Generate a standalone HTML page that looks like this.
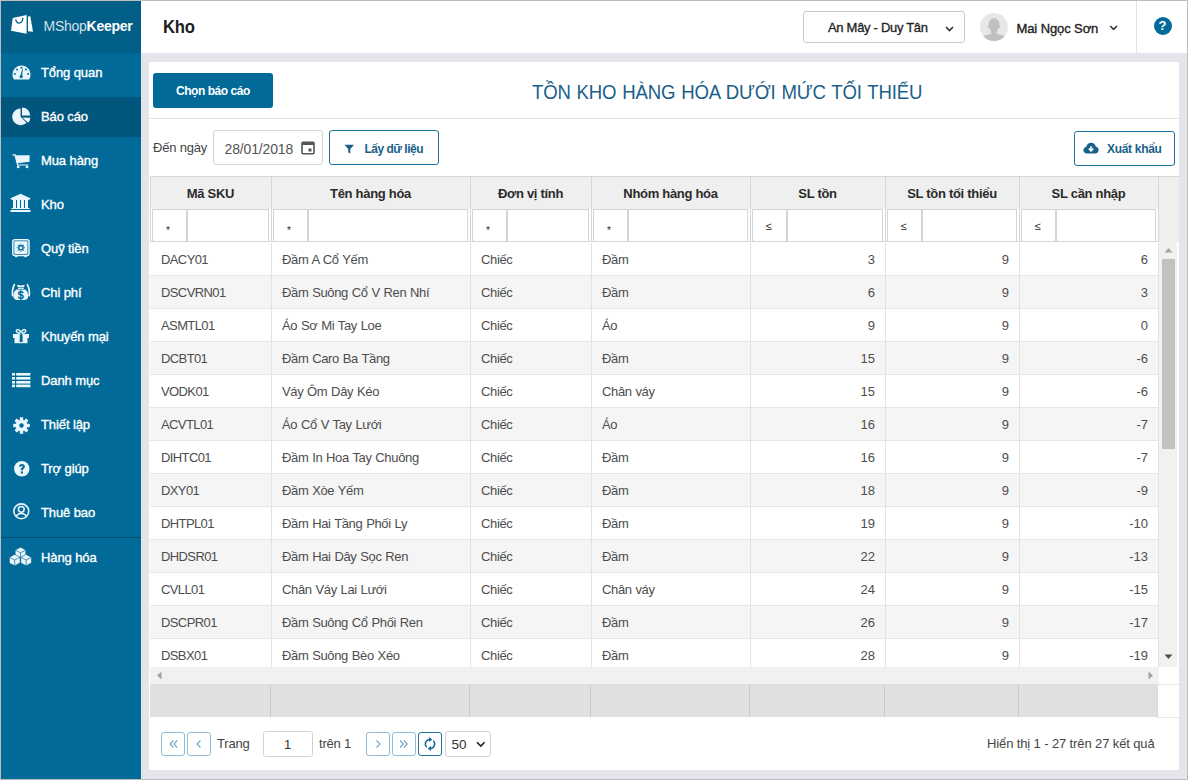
<!DOCTYPE html>
<html><head><meta charset="utf-8">
<style>
*{box-sizing:border-box;margin:0;padding:0}
html,body{width:1188px;height:780px;overflow:hidden}
body{position:relative;background:#e3e5ea;font-family:"Liberation Sans",sans-serif;color:#444;font-size:13px}
.abs{position:absolute}
.t{position:absolute;white-space:nowrap;line-height:1}
.b{position:absolute}
</style></head><body>

<div class="b" style="left:0;top:0;width:1188px;height:780px;border:1px solid #bdbdbd;z-index:99"></div>
<div class="b" style="left:1px;top:1px;width:140px;height:778px;background:#016a99"></div>
<div class="b" style="left:1px;top:1px;width:140px;height:52px;background:#025f88"></div>
<div class="b" style="left:1px;top:97px;width:140px;height:40px;background:#01567e"></div>
<div class="b" style="left:1px;top:537px;width:140px;height:1px;background:#004f72"></div>
<svg class="abs" style="left:0px;top:0px" width="40" height="40" viewBox="0 0 40 40"><path fill="#fff" d="M12.8 17.9 L26.6 15 L26.6 33.8 L11 30.75z"/><path fill="#fff" d="M28 16.5 L30.3 16.2 L33 31.7 L28 31.2z"/><path d="M15.8 19.2 C16 24.6 22.6 24.6 22.9 17.8" stroke="#005e87" stroke-width="1.3" fill="none"/></svg>
<div class="t" style="left:43.5px;top:19px;font-size:14px;color:#fff"><span style="font-weight:normal;letter-spacing:-0.25px;color:rgba(255,255,255,0.82)">MShop</span><span style="font-weight:bold;letter-spacing:-0.3px">Keeper</span></div>
<div class="t" style="left:41px;top:66.0px;font-size:13px;color:#fff;letter-spacing:-0.1px;-webkit-text-stroke:0.35px #fff">Tổng quan</div>
<div class="t" style="left:41px;top:110.0px;font-size:13px;color:#fff;letter-spacing:-0.1px;-webkit-text-stroke:0.35px #fff">Báo cáo</div>
<div class="t" style="left:41px;top:154.0px;font-size:13px;color:#fff;letter-spacing:-0.1px;-webkit-text-stroke:0.35px #fff">Mua hàng</div>
<div class="t" style="left:41px;top:198.0px;font-size:13px;color:#fff;letter-spacing:-0.1px;-webkit-text-stroke:0.35px #fff">Kho</div>
<div class="t" style="left:41px;top:242.0px;font-size:13px;color:#fff;letter-spacing:-0.1px;-webkit-text-stroke:0.35px #fff">Quỹ tiền</div>
<div class="t" style="left:41px;top:286.0px;font-size:13px;color:#fff;letter-spacing:-0.1px;-webkit-text-stroke:0.35px #fff">Chi phí</div>
<div class="t" style="left:41px;top:330.0px;font-size:13px;color:#fff;letter-spacing:-0.1px;-webkit-text-stroke:0.35px #fff">Khuyến mại</div>
<div class="t" style="left:41px;top:374.0px;font-size:13px;color:#fff;letter-spacing:-0.1px;-webkit-text-stroke:0.35px #fff">Danh mục</div>
<div class="t" style="left:41px;top:418.0px;font-size:13px;color:#fff;letter-spacing:-0.1px;-webkit-text-stroke:0.35px #fff">Thiết lập</div>
<div class="t" style="left:41px;top:462.0px;font-size:13px;color:#fff;letter-spacing:-0.1px;-webkit-text-stroke:0.35px #fff">Trợ giúp</div>
<div class="t" style="left:41px;top:506.0px;font-size:13px;color:#fff;letter-spacing:-0.1px;-webkit-text-stroke:0.35px #fff">Thuê bao</div>
<div class="t" style="left:41px;top:551.2px;font-size:13px;color:#fff;letter-spacing:-0.1px;-webkit-text-stroke:0.35px #fff">Hàng hóa</div>
<svg class="abs" style="left:12px;top:64.5px" width="19" height="15" viewBox="0 0 19 15"><path fill="#eaf6fc" d="M9.5 0.5C4.5 0.5 0.5 4.6 0.5 9.6c0 1.9 0.5 3.5 1.4 4.9h15.2c0.9-1.4 1.4-3 1.4-4.9C18.5 4.6 14.5 0.5 9.5 0.5z"/>
      <g fill="#016a99"><circle cx="9.5" cy="2.8" r="1"/><circle cx="5" cy="4.6" r="1"/><circle cx="14" cy="4.6" r="1"/><circle cx="2.9" cy="9.1" r="1"/><circle cx="16.1" cy="9.1" r="1"/>
      <circle cx="9.2" cy="11.6" r="1.6"/><path d="M8.4 11.2 L10.3 3.8 L10.9 4 L10 11.5z"/></g></svg>
<svg class="abs" style="left:11.5px;top:106.5px" width="20" height="19" viewBox="0 0 20 19"><g fill="#eaf6fc"><path d="M8.60 9.80 L14.54 15.74 A8.4 8.4 0 1 1 8.60 1.40z"/><path d="M10.00 8.60 L10.00 0.40 A8.2 8.2 0 0 1 18.20 8.60z"/><path d="M10.30 10.40 L18.30 10.68 A8.0 8.0 0 0 1 16.15 15.86z"/></g></svg>
<svg class="abs" style="left:12px;top:152.8px" width="18" height="16" viewBox="0 0 18 16"><g fill="#eaf6fc"><path d="M0.4 1.2 H3.4 L4.1 2.3 H17.6 V8.8 L5.7 10.2 L6 11.4 H16.2 V12.6 H5.1 L2.5 2.4 H0.4z"/><circle cx="6.2" cy="13.9" r="1.4"/><circle cx="15" cy="13.9" r="1.4"/></g></svg>
<svg class="abs" style="left:10px;top:193px" width="21" height="20" viewBox="0 0 21 20"><g fill="#eaf6fc"><path d="M10.5 0.8 L20.5 5.2 V6 H0.5 V5.2z"/><rect x="1.5" y="6" width="18" height="1"/><rect x="3" y="7" width="3" height="8"/><rect x="7" y="7" width="3" height="8"/><rect x="11" y="7" width="3" height="8"/><rect x="15" y="7" width="3" height="8"/><rect x="1.5" y="15" width="18" height="1"/><rect x="0.5" y="17" width="20" height="2"/></g></svg>
<svg class="abs" style="left:12px;top:238.8px" width="18" height="19" viewBox="0 0 18 19"><rect x="0.8" y="0.8" width="16.2" height="15.8" rx="2" stroke="#eaf6fc" stroke-width="1.5" fill="none"/><rect x="2.3" y="2.3" width="13.2" height="12.8" rx="1" fill="#eaf6fc"/><circle cx="8.9" cy="8.7" r="2.9" fill="#016a99"/><circle cx="8.9" cy="8.7" r="1.5" fill="#eaf6fc"/><circle cx="12.50" cy="8.70" r="0.55" fill="#016a99"/><circle cx="11.45" cy="11.25" r="0.55" fill="#016a99"/><circle cx="8.90" cy="12.30" r="0.55" fill="#016a99"/><circle cx="6.35" cy="11.25" r="0.55" fill="#016a99"/><circle cx="5.30" cy="8.70" r="0.55" fill="#016a99"/><circle cx="6.35" cy="6.15" r="0.55" fill="#016a99"/><circle cx="8.90" cy="5.10" r="0.55" fill="#016a99"/><circle cx="11.45" cy="6.15" r="0.55" fill="#016a99"/><rect x="3" y="16.2" width="2.5" height="2" fill="#eaf6fc"/><rect x="12.3" y="16.2" width="2.5" height="2" fill="#eaf6fc"/></svg>
<svg class="abs" style="left:0px;top:280px" width="40" height="24" viewBox="0 0 40 24"><g fill="#eaf6fc"><path d="M17 5.2 C18.5 4.4 19.8 5.6 20.9 5.6 C22 5.6 23.3 4.4 24.8 5.2 L24 7.1 H17.8z"/><rect x="18" y="7.6" width="5.7" height="1.3"/><path d="M16.4 9.6 H25.2 C27.6 11.5 28.6 14.5 28.1 17 C27.7 19.3 26 20 24 20 H17.6 C15.6 20 13.9 19.3 13.5 17 C13 14.5 14 11.5 16.4 9.6z"/></g><g fill="none" stroke="#eaf6fc" stroke-width="1.7" stroke-linecap="round"><path d="M14.4 4.6 C12.6 8 12.2 12 12.6 15.6"/><path d="M27.4 4.6 C29.2 8 29.6 12 29.2 15.6"/></g><rect x="20.3" y="9.6" width="1" height="10.4" fill="#016a99"/><text x="20.8" y="19.3" font-family="Liberation Sans" font-size="11.5" font-weight="bold" text-anchor="middle" fill="#016a99">$</text></svg>
<svg class="abs" style="left:13px;top:328.8px" width="16" height="15" viewBox="0 0 16 15"><g fill="#eaf6fc"><rect x="0" y="5" width="16" height="4"/><rect x="1.5" y="9" width="13" height="5.2"/></g><g fill="none" stroke="#eaf6fc" stroke-width="1.4"><ellipse cx="5.3" cy="2.4" rx="2.1" ry="1.5" transform="rotate(35 5.3 2.4)"/><ellipse cx="10.7" cy="2.4" rx="2.1" ry="1.5" transform="rotate(-35 10.7 2.4)"/></g><rect x="6.7" y="5.3" width="2.9" height="7.8" rx="0.4" fill="#016a99"/></svg>
<svg class="abs" style="left:12px;top:372.8px" width="19" height="15" viewBox="0 0 19 15"><g fill="#eaf6fc"><rect x="0" y="0" width="3" height="2.6"/><rect x="4.2" y="0" width="14.2" height="2.6"/><rect x="0" y="4" width="3" height="2.6"/><rect x="4.2" y="4" width="14.2" height="2.6"/><rect x="0" y="8" width="3" height="2.6"/><rect x="4.2" y="8" width="14.2" height="2.6"/><rect x="0" y="11.6" width="3" height="2.6"/><rect x="4.2" y="11.6" width="14.2" height="2.6"/></g></svg>
<svg class="abs" style="left:12.5px;top:416.5px" width="17" height="17" viewBox="0 0 17 17"><g transform="translate(8.5 8.5)" fill="#eaf6fc"><circle r="5.8"/>
      <rect x="-1.7" y="-8.3" width="3.4" height="4" rx="0.6"/><rect x="-1.7" y="-8.3" width="3.4" height="4" rx="0.6" transform="rotate(45)"/><rect x="-1.7" y="-8.3" width="3.4" height="4" rx="0.6" transform="rotate(90)"/><rect x="-1.7" y="-8.3" width="3.4" height="4" rx="0.6" transform="rotate(135)"/><rect x="-1.7" y="-8.3" width="3.4" height="4" rx="0.6" transform="rotate(180)"/><rect x="-1.7" y="-8.3" width="3.4" height="4" rx="0.6" transform="rotate(225)"/><rect x="-1.7" y="-8.3" width="3.4" height="4" rx="0.6" transform="rotate(270)"/><rect x="-1.7" y="-8.3" width="3.4" height="4" rx="0.6" transform="rotate(315)"/>
      <circle r="2.2" fill="#016a99"/></g></svg>
<svg class="abs" style="left:13.5px;top:460.5px" width="16" height="16" viewBox="0 0 16 16"><circle cx="7.8" cy="7.8" r="7.7" fill="#eaf6fc"/><path d="M5 5.6 C5 3.9 6.2 3 7.9 3 C9.7 3 10.9 4 10.9 5.4 C10.9 7.3 8.9 7.4 8.9 8.9 V9.3 H6.8 V8.7 C6.8 6.6 8.7 6.4 8.7 5.5 C8.7 5 8.4 4.7 7.9 4.7 C7.4 4.7 7.1 5.1 7.1 5.7z" fill="#016a99"/><rect x="6.8" y="10.4" width="2.1" height="2.1" fill="#016a99"/></svg>
<svg class="abs" style="left:13px;top:502.5px" width="17" height="17" viewBox="0 0 17 17"><circle cx="8.3" cy="8.3" r="7.4" fill="none" stroke="#eaf6fc" stroke-width="1.6"/><circle cx="8.3" cy="6.3" r="2.9" fill="none" stroke="#eaf6fc" stroke-width="1.5"/><path d="M3.2 13.6 C4 11.5 5.8 10.5 8.3 10.5 C10.8 10.5 12.6 11.5 13.4 13.6" fill="none" stroke="#eaf6fc" stroke-width="1.5"/></svg>
<svg class="abs" style="left:9px;top:545.5px" width="23" height="20" viewBox="0 0 23 20"><g fill="#eaf6fc" stroke="#016a99" stroke-width="0.6" stroke-linejoin="round"><path d="M6.2 4 L11.5 1.2 L16.8 4 V9.8 L11.5 12.5 L6.2 9.8z"/><path d="M0.4 11.2 L5.7 8.4 L11 11.2 V17 L5.7 19.7 L0.4 17z"/><path d="M11.8 11.2 L17.1 8.4 L22.4 11.2 V17 L17.1 19.7 L11.8 17z"/></g><g fill="none" stroke="#016a99" stroke-width="0.7"><path d="M6.2 4 L11.5 6.8 L16.8 4 M11.5 6.8 V12.5"/><path d="M0.4 11.2 L5.7 14 L11 11.2 M5.7 14 V19.7"/><path d="M11.8 11.2 L17.1 14 L22.4 11.2 M17.1 14 V19.7"/></g></svg>
<div class="b" style="left:141px;top:1px;width:1046px;height:52px;background:#fff"></div>
<div class="t" style="left:162.5px;top:18px;font-size:18.5px;font-weight:bold;color:#1d1d1d;letter-spacing:-0.3px;transform:scaleX(0.9);transform-origin:0 0">Kho</div>
<div class="b" style="left:803px;top:11px;width:162px;height:32px;border:1px solid #c9c9c9;border-radius:3px;background:#fff"></div>
<div class="t" style="left:828px;top:21px;font-size:13px;color:#222;letter-spacing:-0.3px;-webkit-text-stroke:0.3px #222">An Mây - Duy Tân</div>
<svg class="abs" style="left:944.5px;top:25.5px" width="9" height="6" viewBox="0 0 9 6"><path d="M1 1 L4.5 4.5 L8 1" stroke="#333" stroke-width="1.6" fill="none"/></svg>
<svg class="abs" style="left:1108.5px;top:25px" width="9" height="6" viewBox="0 0 9 6"><path d="M1.2 1 L4.6 4.4 L8 1" stroke="#333" stroke-width="1.6" fill="none"/></svg>
<div class="b" style="left:980px;top:13px;width:28px;height:28px;border-radius:50%;background:#e6e7e9;overflow:hidden"><svg width="28" height="28" viewBox="0 0 28 28"><ellipse cx="14" cy="11.6" rx="5.5" ry="6.6" fill="#bfc0c2"/><path d="M10 14 C10.6 17.5 11 19 11.6 20.5 C9.5 21.6 6 22 3.6 23 L0 28 H28 L24.4 23 C22 22 18.5 21.6 16.4 20.5 C17 19 17.4 17.5 18 14z" fill="#bfc0c2"/><ellipse cx="8.7" cy="13.8" rx="0.9" ry="1.4" fill="#bfc0c2"/><ellipse cx="19.3" cy="13.8" rx="0.9" ry="1.4" fill="#bfc0c2"/></svg></div>
<div class="t" style="left:1016.5px;top:22px;font-size:13px;color:#222;letter-spacing:-0.1px;-webkit-text-stroke:0.35px #222">Mai Ngọc Sơn</div>
<div class="b" style="left:1136px;top:1px;width:1px;height:52px;background:#e2e2e2"></div>
<div class="b" style="left:1153.5px;top:16.8px;width:18.4px;height:18.4px;border-radius:50%;background:#016a99"></div>
<div class="t" style="left:1158.6px;top:18.5px;font-size:13px;font-weight:bold;color:#fff">?</div>
<div class="b" style="left:149px;top:62px;width:1030px;height:708px;background:#fff"></div>
<div class="b" style="left:153px;top:73px;width:120px;height:35px;border-radius:3px;background:#016a99"></div>
<div class="t" style="left:176px;top:85px;font-size:12px;font-weight:bold;color:#fff;letter-spacing:-0.45px">Chọn báo cáo</div>
<div class="t" style="left:532px;top:81.5px;font-size:20px;color:#1a6089;letter-spacing:-0.2px;word-spacing:1px;transform:scaleX(0.93);transform-origin:0 0">TỒN KHO HÀNG HÓA DƯỚI MỨC TỐI THIỂU</div>
<div class="b" style="left:149px;top:118px;width:1030px;height:1px;background:#e4e4e4"></div>
<div class="t" style="left:153px;top:141px;font-size:13px;color:#444;letter-spacing:-0.2px">Đến ngày</div>
<div class="b" style="left:213px;top:130px;width:110px;height:35px;border:1px solid #d4d4d4;border-radius:3px"></div>
<div class="t" style="left:224.5px;top:141.5px;font-size:14px;color:#555;letter-spacing:-0.15px">28/01/2018</div>
<svg class="abs" style="left:301px;top:140px" width="14" height="15" viewBox="0 0 14 15"><g fill="none" stroke="#555" stroke-width="1.6"><rect x="1" y="2.2" width="12" height="11.5" rx="1"/></g><rect x="1" y="2" width="12" height="3" fill="#555"/><rect x="7.5" y="8.5" width="3" height="3" fill="#555"/></svg>
<div class="b" style="left:329px;top:130px;width:110px;height:35px;border:1px solid #1f72a0;border-radius:3px"></div>
<svg class="abs" style="left:343.5px;top:143.5px" width="11" height="11" viewBox="0 0 11 11"><path d="M0.5 0.8 H10 L6.3 5 V9.6 L4.2 8.2 V5z" fill="#1a6089"/></svg>
<div class="t" style="left:364.5px;top:142.5px;font-size:12px;font-weight:bold;color:#1a6089;letter-spacing:-0.5px">Lấy dữ liệu</div>
<div class="b" style="left:1074px;top:131px;width:101px;height:35px;border:1px solid #1f72a0;border-radius:3px"></div>
<svg class="abs" style="left:1083px;top:142px" width="16" height="13" viewBox="0 0 16 13"><path d="M4 11.5 C1.8 11.5 0.4 10 0.4 8.2 C0.4 6.5 1.6 5.2 3.2 5 C3.6 2.6 5.6 0.8 8.1 0.8 C10.5 0.8 12.3 2.4 12.8 4.6 C14.4 4.9 15.6 6.3 15.6 8 C15.6 10 14.1 11.5 12.2 11.5z" fill="#1a6089"/><path d="M8 4.2 V8.6 M5.8 6.6 L8 8.8 L10.2 6.6" stroke="#fff" stroke-width="1.6" fill="none"/></svg>
<div class="t" style="left:1107px;top:143px;font-size:12px;font-weight:bold;color:#1a6089;letter-spacing:-0.3px">Xuất khẩu</div>
<div class="b" style="left:150px;top:176px;width:1029px;height:33px;background:#efefef;border-top:1px solid #d6d6d6;border-left:1px solid #d6d6d6"></div>
<div class="b" style="left:150px;top:209px;width:1009px;height:33px;background:#fff"></div>
<div class="b" style="left:1159px;top:209px;width:20px;height:33px;background:#efefef"></div>
<div class="b" style="left:150px;top:241px;width:1009px;height:1px;background:#dcdcdc"></div>
<div class="b" style="left:150px;top:176px;width:1px;height:66px;background:#d6d6d6"></div>
<div class="t" style="left:150px;width:121px;top:186.5px;text-align:center;font-size:13px;font-weight:bold;color:#2b2b2b;letter-spacing:-0.3px">Mã SKU</div>
<div class="b" style="left:152px;top:209px;width:36px;height:33px;border:1px solid #d4d4d4"></div>
<div class="b" style="left:186px;top:209px;width:83px;height:33px;border:1px solid #d4d4d4"></div>
<div class="t" style="left:166px;top:225.5px;font-size:10px;color:#223">*</div>
<div class="t" style="left:271px;width:199px;top:186.5px;text-align:center;font-size:13px;font-weight:bold;color:#2b2b2b;letter-spacing:-0.3px">Tên hàng hóa</div>
<div class="b" style="left:273px;top:209px;width:36px;height:33px;border:1px solid #d4d4d4"></div>
<div class="b" style="left:307px;top:209px;width:161px;height:33px;border:1px solid #d4d4d4"></div>
<div class="t" style="left:287px;top:225.5px;font-size:10px;color:#223">*</div>
<div class="t" style="left:470px;width:121px;top:186.5px;text-align:center;font-size:13px;font-weight:bold;color:#2b2b2b;letter-spacing:-0.3px">Đơn vị tính</div>
<div class="b" style="left:472px;top:209px;width:36px;height:33px;border:1px solid #d4d4d4"></div>
<div class="b" style="left:506px;top:209px;width:83px;height:33px;border:1px solid #d4d4d4"></div>
<div class="t" style="left:486px;top:225.5px;font-size:10px;color:#223">*</div>
<div class="t" style="left:591px;width:159px;top:186.5px;text-align:center;font-size:13px;font-weight:bold;color:#2b2b2b;letter-spacing:-0.3px">Nhóm hàng hóa</div>
<div class="b" style="left:593px;top:209px;width:36px;height:33px;border:1px solid #d4d4d4"></div>
<div class="b" style="left:627px;top:209px;width:121px;height:33px;border:1px solid #d4d4d4"></div>
<div class="t" style="left:607px;top:225.5px;font-size:10px;color:#223">*</div>
<div class="t" style="left:750px;width:135px;top:186.5px;text-align:center;font-size:13px;font-weight:bold;color:#2b2b2b;letter-spacing:-0.3px">SL tồn</div>
<div class="b" style="left:752px;top:209px;width:36px;height:33px;border:1px solid #d4d4d4"></div>
<div class="b" style="left:786px;top:209px;width:97px;height:33px;border:1px solid #d4d4d4"></div>
<div class="t" style="left:765.5px;top:221px;font-size:11px;color:#222">≤</div>
<div class="t" style="left:885px;width:134px;top:186.5px;text-align:center;font-size:13px;font-weight:bold;color:#2b2b2b;letter-spacing:-0.3px">SL tồn tối thiểu</div>
<div class="b" style="left:887px;top:209px;width:36px;height:33px;border:1px solid #d4d4d4"></div>
<div class="b" style="left:921px;top:209px;width:96px;height:33px;border:1px solid #d4d4d4"></div>
<div class="t" style="left:900.5px;top:221px;font-size:11px;color:#222">≤</div>
<div class="t" style="left:1019px;width:139px;top:186.5px;text-align:center;font-size:13px;font-weight:bold;color:#2b2b2b;letter-spacing:-0.3px">SL cần nhập</div>
<div class="b" style="left:1021px;top:209px;width:36px;height:33px;border:1px solid #d4d4d4"></div>
<div class="b" style="left:1055px;top:209px;width:101px;height:33px;border:1px solid #d4d4d4"></div>
<div class="t" style="left:1034.5px;top:221px;font-size:11px;color:#222">≤</div>
<div class="b" style="left:271px;top:176px;width:1px;height:66px;background:#d6d6d6"></div>
<div class="b" style="left:470px;top:176px;width:1px;height:66px;background:#d6d6d6"></div>
<div class="b" style="left:591px;top:176px;width:1px;height:66px;background:#d6d6d6"></div>
<div class="b" style="left:750px;top:176px;width:1px;height:66px;background:#d6d6d6"></div>
<div class="b" style="left:885px;top:176px;width:1px;height:66px;background:#d6d6d6"></div>
<div class="b" style="left:1019px;top:176px;width:1px;height:66px;background:#d6d6d6"></div>
<div class="b" style="left:1158px;top:176px;width:1px;height:66px;background:#d6d6d6"></div>
<div class="b" style="left:150px;top:243px;width:1009px;height:424px;overflow:hidden">
<div class="b" style="left:0;top:0px;width:1009px;height:33px;background:#fff;border-bottom:1px solid #e6e6e6"></div>
<div class="t" style="left:11px;top:10px;font-size:13px;color:#4d4d4d;letter-spacing:-0.6px;word-spacing:0.5px">DACY01</div>
<div class="t" style="left:132px;top:10px;font-size:13px;color:#4d4d4d;letter-spacing:-0.35px;word-spacing:0.5px">Đầm A Cổ Yếm</div>
<div class="t" style="left:331px;top:10px;font-size:13px;color:#4d4d4d;letter-spacing:-0.35px;word-spacing:0.5px">Chiếc</div>
<div class="t" style="left:452px;top:10px;font-size:13px;color:#4d4d4d;letter-spacing:-0.35px;word-spacing:0.5px">Đầm</div>
<div class="t" style="left:600px;width:125px;text-align:right;top:10px;font-size:13px;color:#4d4d4d">3</div>
<div class="t" style="left:735px;width:124px;text-align:right;top:10px;font-size:13px;color:#4d4d4d">9</div>
<div class="t" style="left:869px;width:129px;text-align:right;top:10px;font-size:13px;color:#4d4d4d">6</div>
<div class="b" style="left:0;top:33px;width:1009px;height:33px;background:#f5f5f5;border-bottom:1px solid #e6e6e6"></div>
<div class="t" style="left:11px;top:43px;font-size:13px;color:#4d4d4d;letter-spacing:-0.6px;word-spacing:0.5px">DSCVRN01</div>
<div class="t" style="left:132px;top:43px;font-size:13px;color:#4d4d4d;letter-spacing:-0.35px;word-spacing:0.5px">Đầm Suông Cổ V Ren Nhí</div>
<div class="t" style="left:331px;top:43px;font-size:13px;color:#4d4d4d;letter-spacing:-0.35px;word-spacing:0.5px">Chiếc</div>
<div class="t" style="left:452px;top:43px;font-size:13px;color:#4d4d4d;letter-spacing:-0.35px;word-spacing:0.5px">Đầm</div>
<div class="t" style="left:600px;width:125px;text-align:right;top:43px;font-size:13px;color:#4d4d4d">6</div>
<div class="t" style="left:735px;width:124px;text-align:right;top:43px;font-size:13px;color:#4d4d4d">9</div>
<div class="t" style="left:869px;width:129px;text-align:right;top:43px;font-size:13px;color:#4d4d4d">3</div>
<div class="b" style="left:0;top:66px;width:1009px;height:33px;background:#fff;border-bottom:1px solid #e6e6e6"></div>
<div class="t" style="left:11px;top:76px;font-size:13px;color:#4d4d4d;letter-spacing:-0.6px;word-spacing:0.5px">ASMTL01</div>
<div class="t" style="left:132px;top:76px;font-size:13px;color:#4d4d4d;letter-spacing:-0.35px;word-spacing:0.5px">Áo Sơ Mi Tay Loe</div>
<div class="t" style="left:331px;top:76px;font-size:13px;color:#4d4d4d;letter-spacing:-0.35px;word-spacing:0.5px">Chiếc</div>
<div class="t" style="left:452px;top:76px;font-size:13px;color:#4d4d4d;letter-spacing:-0.35px;word-spacing:0.5px">Áo</div>
<div class="t" style="left:600px;width:125px;text-align:right;top:76px;font-size:13px;color:#4d4d4d">9</div>
<div class="t" style="left:735px;width:124px;text-align:right;top:76px;font-size:13px;color:#4d4d4d">9</div>
<div class="t" style="left:869px;width:129px;text-align:right;top:76px;font-size:13px;color:#4d4d4d">0</div>
<div class="b" style="left:0;top:99px;width:1009px;height:33px;background:#f5f5f5;border-bottom:1px solid #e6e6e6"></div>
<div class="t" style="left:11px;top:109px;font-size:13px;color:#4d4d4d;letter-spacing:-0.6px;word-spacing:0.5px">DCBT01</div>
<div class="t" style="left:132px;top:109px;font-size:13px;color:#4d4d4d;letter-spacing:-0.35px;word-spacing:0.5px">Đầm Caro Ba Tầng</div>
<div class="t" style="left:331px;top:109px;font-size:13px;color:#4d4d4d;letter-spacing:-0.35px;word-spacing:0.5px">Chiếc</div>
<div class="t" style="left:452px;top:109px;font-size:13px;color:#4d4d4d;letter-spacing:-0.35px;word-spacing:0.5px">Đầm</div>
<div class="t" style="left:600px;width:125px;text-align:right;top:109px;font-size:13px;color:#4d4d4d">15</div>
<div class="t" style="left:735px;width:124px;text-align:right;top:109px;font-size:13px;color:#4d4d4d">9</div>
<div class="t" style="left:869px;width:129px;text-align:right;top:109px;font-size:13px;color:#4d4d4d">-6</div>
<div class="b" style="left:0;top:132px;width:1009px;height:33px;background:#fff;border-bottom:1px solid #e6e6e6"></div>
<div class="t" style="left:11px;top:142px;font-size:13px;color:#4d4d4d;letter-spacing:-0.6px;word-spacing:0.5px">VODK01</div>
<div class="t" style="left:132px;top:142px;font-size:13px;color:#4d4d4d;letter-spacing:-0.35px;word-spacing:0.5px">Váy Ôm Dây Kéo</div>
<div class="t" style="left:331px;top:142px;font-size:13px;color:#4d4d4d;letter-spacing:-0.35px;word-spacing:0.5px">Chiếc</div>
<div class="t" style="left:452px;top:142px;font-size:13px;color:#4d4d4d;letter-spacing:-0.35px;word-spacing:0.5px">Chân váy</div>
<div class="t" style="left:600px;width:125px;text-align:right;top:142px;font-size:13px;color:#4d4d4d">15</div>
<div class="t" style="left:735px;width:124px;text-align:right;top:142px;font-size:13px;color:#4d4d4d">9</div>
<div class="t" style="left:869px;width:129px;text-align:right;top:142px;font-size:13px;color:#4d4d4d">-6</div>
<div class="b" style="left:0;top:165px;width:1009px;height:33px;background:#f5f5f5;border-bottom:1px solid #e6e6e6"></div>
<div class="t" style="left:11px;top:175px;font-size:13px;color:#4d4d4d;letter-spacing:-0.6px;word-spacing:0.5px">ACVTL01</div>
<div class="t" style="left:132px;top:175px;font-size:13px;color:#4d4d4d;letter-spacing:-0.35px;word-spacing:0.5px">Áo Cổ V Tay Lưới</div>
<div class="t" style="left:331px;top:175px;font-size:13px;color:#4d4d4d;letter-spacing:-0.35px;word-spacing:0.5px">Chiếc</div>
<div class="t" style="left:452px;top:175px;font-size:13px;color:#4d4d4d;letter-spacing:-0.35px;word-spacing:0.5px">Áo</div>
<div class="t" style="left:600px;width:125px;text-align:right;top:175px;font-size:13px;color:#4d4d4d">16</div>
<div class="t" style="left:735px;width:124px;text-align:right;top:175px;font-size:13px;color:#4d4d4d">9</div>
<div class="t" style="left:869px;width:129px;text-align:right;top:175px;font-size:13px;color:#4d4d4d">-7</div>
<div class="b" style="left:0;top:198px;width:1009px;height:33px;background:#fff;border-bottom:1px solid #e6e6e6"></div>
<div class="t" style="left:11px;top:208px;font-size:13px;color:#4d4d4d;letter-spacing:-0.6px;word-spacing:0.5px">DIHTC01</div>
<div class="t" style="left:132px;top:208px;font-size:13px;color:#4d4d4d;letter-spacing:-0.35px;word-spacing:0.5px">Đầm In Hoa Tay Chuông</div>
<div class="t" style="left:331px;top:208px;font-size:13px;color:#4d4d4d;letter-spacing:-0.35px;word-spacing:0.5px">Chiếc</div>
<div class="t" style="left:452px;top:208px;font-size:13px;color:#4d4d4d;letter-spacing:-0.35px;word-spacing:0.5px">Đầm</div>
<div class="t" style="left:600px;width:125px;text-align:right;top:208px;font-size:13px;color:#4d4d4d">16</div>
<div class="t" style="left:735px;width:124px;text-align:right;top:208px;font-size:13px;color:#4d4d4d">9</div>
<div class="t" style="left:869px;width:129px;text-align:right;top:208px;font-size:13px;color:#4d4d4d">-7</div>
<div class="b" style="left:0;top:231px;width:1009px;height:33px;background:#f5f5f5;border-bottom:1px solid #e6e6e6"></div>
<div class="t" style="left:11px;top:241px;font-size:13px;color:#4d4d4d;letter-spacing:-0.6px;word-spacing:0.5px">DXY01</div>
<div class="t" style="left:132px;top:241px;font-size:13px;color:#4d4d4d;letter-spacing:-0.35px;word-spacing:0.5px">Đầm Xòe Yếm</div>
<div class="t" style="left:331px;top:241px;font-size:13px;color:#4d4d4d;letter-spacing:-0.35px;word-spacing:0.5px">Chiếc</div>
<div class="t" style="left:452px;top:241px;font-size:13px;color:#4d4d4d;letter-spacing:-0.35px;word-spacing:0.5px">Đầm</div>
<div class="t" style="left:600px;width:125px;text-align:right;top:241px;font-size:13px;color:#4d4d4d">18</div>
<div class="t" style="left:735px;width:124px;text-align:right;top:241px;font-size:13px;color:#4d4d4d">9</div>
<div class="t" style="left:869px;width:129px;text-align:right;top:241px;font-size:13px;color:#4d4d4d">-9</div>
<div class="b" style="left:0;top:264px;width:1009px;height:33px;background:#fff;border-bottom:1px solid #e6e6e6"></div>
<div class="t" style="left:11px;top:274px;font-size:13px;color:#4d4d4d;letter-spacing:-0.6px;word-spacing:0.5px">DHTPL01</div>
<div class="t" style="left:132px;top:274px;font-size:13px;color:#4d4d4d;letter-spacing:-0.35px;word-spacing:0.5px">Đầm Hai Tầng Phối Ly</div>
<div class="t" style="left:331px;top:274px;font-size:13px;color:#4d4d4d;letter-spacing:-0.35px;word-spacing:0.5px">Chiếc</div>
<div class="t" style="left:452px;top:274px;font-size:13px;color:#4d4d4d;letter-spacing:-0.35px;word-spacing:0.5px">Đầm</div>
<div class="t" style="left:600px;width:125px;text-align:right;top:274px;font-size:13px;color:#4d4d4d">19</div>
<div class="t" style="left:735px;width:124px;text-align:right;top:274px;font-size:13px;color:#4d4d4d">9</div>
<div class="t" style="left:869px;width:129px;text-align:right;top:274px;font-size:13px;color:#4d4d4d">-10</div>
<div class="b" style="left:0;top:297px;width:1009px;height:33px;background:#f5f5f5;border-bottom:1px solid #e6e6e6"></div>
<div class="t" style="left:11px;top:307px;font-size:13px;color:#4d4d4d;letter-spacing:-0.6px;word-spacing:0.5px">DHDSR01</div>
<div class="t" style="left:132px;top:307px;font-size:13px;color:#4d4d4d;letter-spacing:-0.35px;word-spacing:0.5px">Đầm Hai Dây Sọc Ren</div>
<div class="t" style="left:331px;top:307px;font-size:13px;color:#4d4d4d;letter-spacing:-0.35px;word-spacing:0.5px">Chiếc</div>
<div class="t" style="left:452px;top:307px;font-size:13px;color:#4d4d4d;letter-spacing:-0.35px;word-spacing:0.5px">Đầm</div>
<div class="t" style="left:600px;width:125px;text-align:right;top:307px;font-size:13px;color:#4d4d4d">22</div>
<div class="t" style="left:735px;width:124px;text-align:right;top:307px;font-size:13px;color:#4d4d4d">9</div>
<div class="t" style="left:869px;width:129px;text-align:right;top:307px;font-size:13px;color:#4d4d4d">-13</div>
<div class="b" style="left:0;top:330px;width:1009px;height:33px;background:#fff;border-bottom:1px solid #e6e6e6"></div>
<div class="t" style="left:11px;top:340px;font-size:13px;color:#4d4d4d;letter-spacing:-0.6px;word-spacing:0.5px">CVLL01</div>
<div class="t" style="left:132px;top:340px;font-size:13px;color:#4d4d4d;letter-spacing:-0.35px;word-spacing:0.5px">Chân Váy Lai Lưới</div>
<div class="t" style="left:331px;top:340px;font-size:13px;color:#4d4d4d;letter-spacing:-0.35px;word-spacing:0.5px">Chiếc</div>
<div class="t" style="left:452px;top:340px;font-size:13px;color:#4d4d4d;letter-spacing:-0.35px;word-spacing:0.5px">Chân váy</div>
<div class="t" style="left:600px;width:125px;text-align:right;top:340px;font-size:13px;color:#4d4d4d">24</div>
<div class="t" style="left:735px;width:124px;text-align:right;top:340px;font-size:13px;color:#4d4d4d">9</div>
<div class="t" style="left:869px;width:129px;text-align:right;top:340px;font-size:13px;color:#4d4d4d">-15</div>
<div class="b" style="left:0;top:363px;width:1009px;height:33px;background:#f5f5f5;border-bottom:1px solid #e6e6e6"></div>
<div class="t" style="left:11px;top:373px;font-size:13px;color:#4d4d4d;letter-spacing:-0.6px;word-spacing:0.5px">DSCPR01</div>
<div class="t" style="left:132px;top:373px;font-size:13px;color:#4d4d4d;letter-spacing:-0.35px;word-spacing:0.5px">Đầm Suông Cổ Phối Ren</div>
<div class="t" style="left:331px;top:373px;font-size:13px;color:#4d4d4d;letter-spacing:-0.35px;word-spacing:0.5px">Chiếc</div>
<div class="t" style="left:452px;top:373px;font-size:13px;color:#4d4d4d;letter-spacing:-0.35px;word-spacing:0.5px">Đầm</div>
<div class="t" style="left:600px;width:125px;text-align:right;top:373px;font-size:13px;color:#4d4d4d">26</div>
<div class="t" style="left:735px;width:124px;text-align:right;top:373px;font-size:13px;color:#4d4d4d">9</div>
<div class="t" style="left:869px;width:129px;text-align:right;top:373px;font-size:13px;color:#4d4d4d">-17</div>
<div class="b" style="left:0;top:396px;width:1009px;height:33px;background:#fff;border-bottom:1px solid #e6e6e6"></div>
<div class="t" style="left:11px;top:406px;font-size:13px;color:#4d4d4d;letter-spacing:-0.6px;word-spacing:0.5px">DSBX01</div>
<div class="t" style="left:132px;top:406px;font-size:13px;color:#4d4d4d;letter-spacing:-0.35px;word-spacing:0.5px">Đầm Suông Bèo Xéo</div>
<div class="t" style="left:331px;top:406px;font-size:13px;color:#4d4d4d;letter-spacing:-0.35px;word-spacing:0.5px">Chiếc</div>
<div class="t" style="left:452px;top:406px;font-size:13px;color:#4d4d4d;letter-spacing:-0.35px;word-spacing:0.5px">Đầm</div>
<div class="t" style="left:600px;width:125px;text-align:right;top:406px;font-size:13px;color:#4d4d4d">28</div>
<div class="t" style="left:735px;width:124px;text-align:right;top:406px;font-size:13px;color:#4d4d4d">9</div>
<div class="t" style="left:869px;width:129px;text-align:right;top:406px;font-size:13px;color:#4d4d4d">-19</div>
<div class="b" style="left:121px;top:0;width:1px;height:424px;background:#e3e3e3"></div>
<div class="b" style="left:320px;top:0;width:1px;height:424px;background:#e3e3e3"></div>
<div class="b" style="left:441px;top:0;width:1px;height:424px;background:#e3e3e3"></div>
<div class="b" style="left:600px;top:0;width:1px;height:424px;background:#e3e3e3"></div>
<div class="b" style="left:735px;top:0;width:1px;height:424px;background:#e3e3e3"></div>
<div class="b" style="left:869px;top:0;width:1px;height:424px;background:#e3e3e3"></div>
<div class="b" style="left:1008px;top:0;width:1px;height:424px;background:#e3e3e3"></div>
</div>
<div class="b" style="left:1159px;top:242px;width:18px;height:425px;background:#f1f1f1"></div>
<div class="b" style="left:1162px;top:259px;width:13px;height:190px;background:#c1c1c1"></div>
<svg class="abs" style="left:1164px;top:247px" width="9" height="6" viewBox="0 0 9 6"><path d="M0.5 5.5 L4.5 1 L8.5 5.5z" fill="#a3a3a3"/></svg>
<svg class="abs" style="left:1164px;top:654px" width="9" height="6" viewBox="0 0 9 6"><path d="M0.5 0.5 L4.5 5 L8.5 0.5z" fill="#505050"/></svg>
<div class="b" style="left:150px;top:667px;width:1009px;height:17px;background:#f1f1f1"></div>
<svg class="abs" style="left:156px;top:671px" width="6" height="9" viewBox="0 0 6 9"><path d="M5.5 0.5 L1 4.5 L5.5 8.5z" fill="#a3a3a3"/></svg>
<svg class="abs" style="left:1148px;top:671px" width="6" height="9" viewBox="0 0 6 9"><path d="M0.5 0.5 L5 4.5 L0.5 8.5z" fill="#a3a3a3"/></svg>
<div class="b" style="left:150px;top:684px;width:1008px;height:33px;background:#e0e0e0"></div>
<div class="b" style="left:1157px;top:684px;width:22px;height:34px;border-left:1px solid #d8d8d8;border-top:1px solid #e6e6e6;border-bottom:1px solid #e6e6e6;background:#fff"></div>
<div class="b" style="left:270px;top:685px;width:1px;height:32px;background:#c8c8c8"></div>
<div class="b" style="left:469px;top:685px;width:1px;height:32px;background:#c8c8c8"></div>
<div class="b" style="left:590px;top:685px;width:1px;height:32px;background:#c8c8c8"></div>
<div class="b" style="left:749px;top:685px;width:1px;height:32px;background:#c8c8c8"></div>
<div class="b" style="left:884px;top:685px;width:1px;height:32px;background:#c8c8c8"></div>
<div class="b" style="left:1018px;top:685px;width:1px;height:32px;background:#c8c8c8"></div>
<div class="b" style="left:161px;top:732px;width:23.5px;height:24px;border:1px solid #8fbdd4;border-radius:3px;background:#fff"></div>
<svg class="abs" style="left:165px;top:736px" width="16" height="16" viewBox="0 0 16 16"><path d="M8.3 4.5 L5 8 L8.3 11.5 M12.2 4.5 L8.9 8 L12.2 11.5" stroke="#69a6c6" stroke-width="1.1" fill="none"/></svg>
<div class="b" style="left:187px;top:732px;width:23.5px;height:24px;border:1px solid #8fbdd4;border-radius:3px;background:#fff"></div>
<svg class="abs" style="left:191px;top:736px" width="16" height="16" viewBox="0 0 16 16"><path d="M9.5 4.5 L6 8 L9.5 11.5" stroke="#69a6c6" stroke-width="1.1" fill="none"/></svg>
<div class="t" style="left:217px;top:737px;font-size:13px;color:#444;letter-spacing:-0.2px">Trang</div>
<div class="b" style="left:263px;top:731px;width:50px;height:26px;border:1px solid #d2d2d2;border-radius:3px"></div>
<div class="t" style="left:284px;top:738px;font-size:13px;color:#333">1</div>
<div class="t" style="left:319px;top:737px;font-size:13px;color:#444;letter-spacing:-0.2px">trên 1</div>
<div class="b" style="left:366px;top:732px;width:23.5px;height:24px;border:1px solid #8fbdd4;border-radius:3px;background:#fff"></div>
<svg class="abs" style="left:370px;top:736px" width="16" height="16" viewBox="0 0 16 16"><path d="M6.5 4.5 L10 8 L6.5 11.5" stroke="#69a6c6" stroke-width="1.1" fill="none"/></svg>
<div class="b" style="left:392px;top:732px;width:23.5px;height:24px;border:1px solid #8fbdd4;border-radius:3px;background:#fff"></div>
<svg class="abs" style="left:396px;top:736px" width="16" height="16" viewBox="0 0 16 16"><path d="M4 4.5 L7.3 8 L4 11.5 M7.9 4.5 L11.2 8 L7.9 11.5" stroke="#69a6c6" stroke-width="1.1" fill="none"/></svg>
<div class="b" style="left:418px;top:732px;width:23.5px;height:24px;border:1px solid #1f74a3;border-radius:3px;background:#fff"></div>
<svg class="abs" style="left:422px;top:736px" width="16" height="16" viewBox="0 0 16 16"><path d="M7.5 3.4 A4.6 4.6 0 0 0 4.75 11.25" stroke="#1a6a98" stroke-width="1.5" fill="none"/><path d="M8.5 12.6 A4.6 4.6 0 0 0 11.25 4.75" stroke="#1a6a98" stroke-width="1.5" fill="none"/><path d="M7 0.9 L10.4 3.4 L7 5.9z M9 10.1 L5.6 12.6 L9 15.1z" fill="#1a6a98"/></svg>
<div class="b" style="left:445px;top:731px;width:46px;height:26px;border:1px solid #d2d2d2;border-radius:3px"></div>
<div class="t" style="left:451.5px;top:738px;font-size:13.5px;color:#333">50</div>
<svg class="abs" style="left:475.5px;top:741px" width="10" height="7" viewBox="0 0 10 7"><path d="M1 1.2 L4.8 5 L8.6 1.2" stroke="#222" stroke-width="1.6" fill="none"/></svg>
<div class="t" style="left:987px;top:737px;font-size:13px;color:#444;letter-spacing:-0.12px">Hiển thị 1 - 27 trên 27 kết quả</div>
</body></html>
